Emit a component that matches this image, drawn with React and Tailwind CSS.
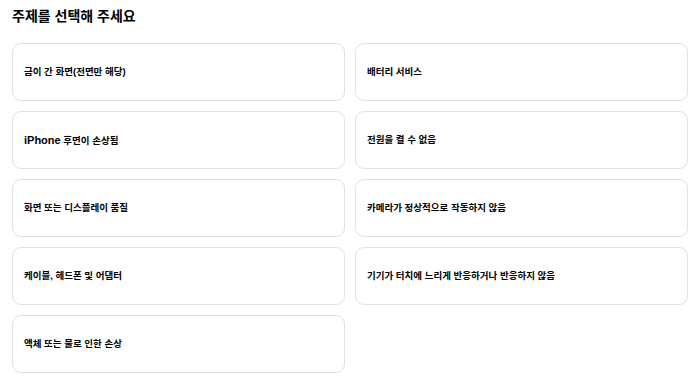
const topics = [
  '금이 간 화면(전면만 해당)',
  '배터리 서비스',
  'iPhone 후면이 손상됨',
  '전원을 켤 수 없음',
  '화면 또는 디스플레이 품질',
  '카메라가 정상적으로 작동하지 않음',
  '케이블, 헤드폰 및 어댑터',
  '기기가 터치에 느리게 반응하거나 반응하지 않음',
  '액체 또는 물로 인한 손상',
];

function Label({ text }) {
  // Latin in the original renders noticeably larger than the Hangul
  if (text.startsWith('iPhone')) {
    return (
      <span>
        <span className="text-[11px]">iPhone</span>
        {text.slice(6)}
      </span>
    );
  }
  return <span>{text}</span>;
}

export default function App() {
  return (
    <div
      className="w-[700px] h-[391px] bg-white px-[12px] pt-[6px] text-black"
      style={{ fontFamily: '"Liberation Sans", "Noto Sans CJK KR", sans-serif' }}
    >
      <h1 className="text-[14px] font-bold leading-[20px]">주제를 선택해 주세요</h1>
      <div className="mt-[17px] grid grid-cols-2 gap-[10px]">
        {topics.map((t) => (
          <button
            key={t}
            className="h-[58px] flex items-center px-[11px] rounded-[9px] border-[1.5px] border-[#e1e1e1] bg-white text-left text-[9.5px] font-bold"
          >
            <Label text={t} />
          </button>
        ))}
      </div>
    </div>
  );
}
